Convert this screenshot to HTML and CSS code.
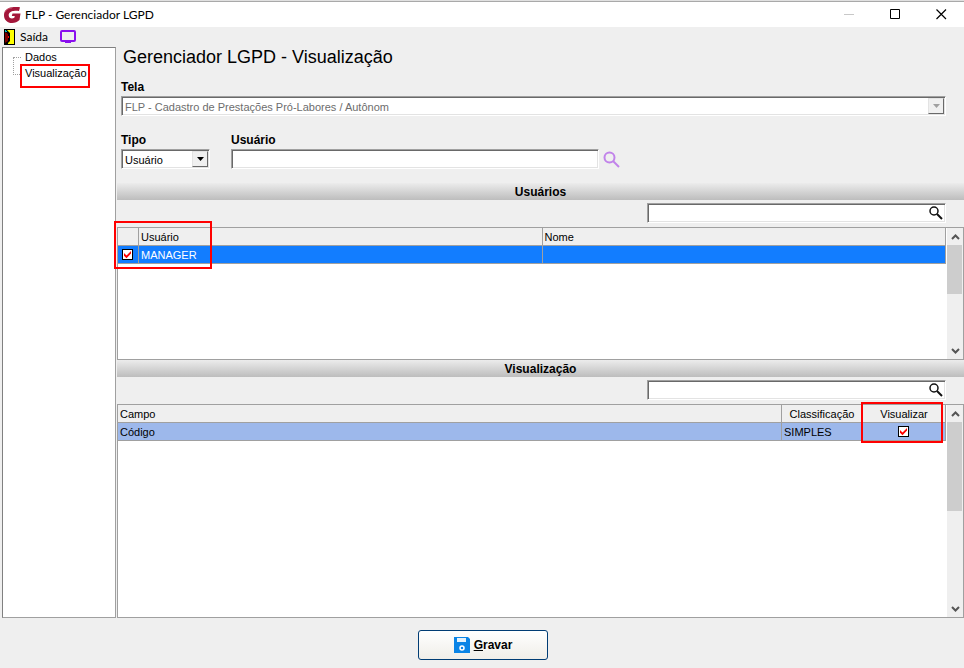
FILE: index.html
```html
<!DOCTYPE html>
<html lang="pt-BR">
<head>
    <meta charset="UTF-8">
    <meta name="viewport" content="width=device-width, initial-scale=1.0">
    <title>FLP - Gerenciador LGPD</title>
    <link rel="stylesheet" href="styles.css">
</head>
<body>
    <header class="titlebar">
        <svg class="logo" width="17" height="16" viewBox="0 0 17 16">
            <path d="M16 0.300C13.500 -.1 10 0 7 .5C3 1.200 0 4 0 8.200C0 12.800 3.300 16 8 16C11 16 13.500 15 15.500 13L16.500 6.500H8.500L7.800 9H10.800L10.300 10.800C8 12.300 4.800 11.500 4.700 8.300C4.600 5.500 7 4 10 3.900C12 3.800 13.500 3.900 15 4.100Z" fill="#a3163a"/>
            <path d="M1 5C2.500 2 5 1.200 8 1" fill="none" stroke="#c9506b"/>
        </svg>
        <span class="caption">FLP - Gerenciador LGPD</span>
        <button class="win-btn" aria-label="Minimizar">
            <svg width="11" height="11"><path d="M0 5.500H10" stroke="#c8c8c8"/></svg>
        </button>
        <button class="win-btn" aria-label="Maximizar">
            <svg width="11" height="11"><path d="M.5.5H9.500V9.500H.5Z" fill="none" stroke="#000"/></svg>
        </button>
        <button class="win-btn" aria-label="Fechar">
            <svg width="11" height="11"><path d="M.5.5L10 10M10 .5L.5 10" stroke="#000" stroke-width="1.200"/></svg>
        </button>
    </header>

    <div class="toolbar">
        <button class="tool-btn">
            <svg width="11" height="16" viewBox="0 0 11 16">
                <path d="M0 0H11V16H0Z" fill="#000"/>
                <path d="M4 1H10V15H4V14L6 12V4L3 1Z" fill="#ff0"/>
                <path d="M1 3L4 5V12L1 14Z" fill="#840000"/>
                <path d="M1 1H2V3H1ZM2 2H3V3H2Z" fill="#00c8c8"/>
                <path d="M4 7H5V9H4Z" fill="#f00"/>
            </svg>
            <span>Saída</span>
        </button>
        <button class="tool-btn" aria-label="Tela">
            <svg width="16" height="14" viewBox="0 0 16 14">
                <rect x="1" y="1" width="14" height="10" rx="1" fill="none" stroke="#8a0fee" stroke-width="2"/>
                <path d="M5 11H11V13H5Z" fill="#8a0fee"/>
            </svg>
        </button>
    </div>

    <div class="main">
        <nav class="tree">
            <a href="#dados">Dados</a>
            <a href="#visualizacao" class="marked">Visualização</a>
        </nav>

        <main class="content">
            <h1>Gerenciador LGPD - Visualização</h1>
            <div class="form">
                <div class="field">
                    <label for="tela">Tela</label>
                    <div class="combo disabled">
                        <select id="tela" disabled>
                            <option>FLP - Cadastro de Prestações Pró-Labores / Autônom</option>
                        </select>
                        <span class="drop"><svg width="7" height="4"><path d="M0 0H7L3.500 4Z" fill="#a0a0a0"/></svg></span>
                    </div>
                </div>
                <div class="form-row">
                    <div class="field tipo">
                        <label for="tipo">Tipo</label>
                        <div class="combo">
                            <select id="tipo">
                                <option>Usuário</option>
                            </select>
                            <span class="drop"><svg width="7" height="4"><path d="M0 0H7L3.500 4Z" fill="#000"/></svg></span>
                        </div>
                    </div>
                    <div class="field usuario">
                        <label for="usuario">Usuário</label>
                        <input class="textbox" type="text" id="usuario">
                    </div>
                    <button class="lookup" aria-label="Pesquisar usuário">
                        <svg width="17" height="17" viewBox="0 0 17 17" fill="none" stroke="#c183ea" stroke-width="2">
                            <circle cx="6.500" cy="6.500" r="5"/>
                            <path d="M10 10L16 16"/>
                        </svg>
                    </button>
                </div>
            </div>

            <h2>Usuários</h2>
            <div class="search">
                <input type="text" aria-label="Pesquisar em usuários">
                <svg width="14" height="14" viewBox="0 0 14 14" fill="none" stroke="#111">
                    <circle cx="5" cy="5" r="4" stroke-width="1.500"/>
                    <path d="M8 8L13 13" stroke-width="2"/>
                </svg>
            </div>
            <div class="grid users">
                <div class="grid-body">
                    <table>
                        <colgroup><col class="col-check"><col><col></colgroup>
                        <thead>
                            <tr><th></th><th>Usuário</th><th>Nome</th></tr>
                        </thead>
                        <tbody>
                            <tr class="selected">
                                <td class="check"><input type="checkbox" aria-label="MANAGER" checked></td>
                                <td>MANAGER</td>
                                <td></td>
                            </tr>
                        </tbody>
                    </table>
                </div>
                <div class="scrollbar">
                    <svg width="9" height="6"><path d="M1 5L4.500 1.500L8 5" fill="none" stroke="#555" stroke-width="2"/></svg>
                    <div class="track"><div class="thumb"></div></div>
                    <svg width="9" height="6"><path d="M1 1L4.500 4.500L8 1" fill="none" stroke="#555" stroke-width="2"/></svg>
                </div>
                <div class="mark mark-user"></div>
            </div>

            <h2>Visualização</h2>
            <div class="search">
                <input type="text" aria-label="Pesquisar em visualização">
                <svg width="14" height="14" viewBox="0 0 14 14" fill="none" stroke="#111">
                    <circle cx="5" cy="5" r="4" stroke-width="1.500"/>
                    <path d="M8 8L13 13" stroke-width="2"/>
                </svg>
            </div>
            <div class="grid fields">
                <div class="grid-body">
                    <table>
                        <colgroup><col><col class="col-class"><col class="col-view"></colgroup>
                        <thead>
                            <tr><th>Campo</th><th class="center">Classificação</th><th class="center">Visualizar</th></tr>
                        </thead>
                        <tbody>
                            <tr class="current">
                                <td>Código</td>
                                <td>SIMPLES</td>
                                <td class="check"><input type="checkbox" aria-label="Visualizar Código" checked></td>
                            </tr>
                        </tbody>
                    </table>
                </div>
                <div class="scrollbar">
                    <svg width="9" height="6"><path d="M1 5L4.500 1.500L8 5" fill="none" stroke="#555" stroke-width="2"/></svg>
                    <div class="track"><div class="thumb"></div></div>
                    <svg width="9" height="6"><path d="M1 1L4.500 4.500L8 1" fill="none" stroke="#555" stroke-width="2"/></svg>
                </div>
                <div class="mark mark-view"></div>
            </div>
        </main>
    </div>

    <footer class="footer">
        <button class="save">
            <svg width="16" height="16" viewBox="0 0 16 16">
                <path d="M0 0H14L16 2V16H0Z" fill="#0a84e6"/>
                <path d="M3 1H12V5H3Z" fill="#e4f2fc"/>
                <circle cx="8" cy="11" r="2" fill="none" stroke="#fff" stroke-width="1.500"/>
            </svg>
            <span><u>G</u>ravar</span>
        </button>
    </footer>
</body>
</html>
```
FILE: styles.css
```css
* {
    box-sizing: border-box;
}
body {
    display: flex;
    flex-direction: column;
    min-height: 100vh;
    margin: 0;
    border-top: 1px solid #e0e0e0;
    background-color: #efefef;
    color: #000;
    font-family: "Liberation Sans", Arial, sans-serif;
    font-size: 11px;
    line-height: 16px;
}
button {
    padding: 0;
    border: none;
    background: none;
    color: inherit;
    font: inherit;
}
svg {
    display: block;
}

/* window caption */
.titlebar {
    display: flex;
    align-items: center;
    height: 26px;
    padding-left: 4px;
    border-top: 1px solid #a9a9a9;
    background-color: #fff;
    font-family: Lato, "Open Sans", sans-serif;
}
.caption {
    flex: 1;
    padding-left: 4px;
    font-size: 12px;
}
.win-btn {
    display: flex;
    align-items: center;
    justify-content: center;
    width: 46px;
    height: 100%;
}
.toolbar {
    display: flex;
    gap: 12px;
    height: 20px;
    padding-left: 4px;
    font-family: Lato, "Open Sans", sans-serif;
    font-size: 12px;
}
.tool-btn {
    display: flex;
    align-items: center;
    gap: 5px;
}

.main {
    display: flex;
    flex: 1;
    gap: 1px;
    padding-left: 2px;
}
.tree {
    width: 114px;
    padding: 1px 0 0 10px;
    border: 1px solid #808080;
    border-right-color: #a0a0a0;
    border-bottom-color: #a0a0a0;
    background-color: #fff;
}
.tree a {
    display: flex;
    align-items: center;
    width: max-content;
    height: 16px;
    color: #000;
    text-decoration: none;
}
.tree a::before {
    content: "";
    width: 8px;
    margin-right: 4px;
    border-top: 1px dotted #a0a0a0;
}
.tree a.marked {
    position: relative;
}
.tree a.marked::before {
    align-self: flex-start;
    height: 17px;
    margin-top: -8px;
    margin-right: 3px;
    border: dotted #a0a0a0;
    border-width: 0 0 1px 1px;
}
.tree a.marked::after {
    content: "";
    position: absolute;
    inset: -1px -3px -7px 7px;
    border: 2px solid #f00;
}

.content {
    display: flex;
    flex: 1;
    flex-direction: column;
    min-width: 0;
}
h1 {
    margin: 0;
    padding-left: 6px;
    font-size: 18px;
    font-weight: normal;
    line-height: 21px;
}
.form {
    display: flex;
    flex-direction: column;
    gap: 16px;
    padding: 11px 18px 14px 4px;
}
.form-row {
    display: flex;
    align-items: flex-end;
}
.field {
    display: flex;
    flex-direction: column;
    gap: 1px;
}
.field label {
    font-size: 12px;
    font-weight: bold;
}
.tipo {
    width: 89px;
    margin-right: 21px;
}
.usuario {
    flex: 0 1 368px;
}
.combo,
.textbox,
.search input {
    height: 20px;
    border: 1px solid;
    border-color: #a0a0a0 #fff #fff #a0a0a0;
    background-color: #fff;
    box-shadow: inset 1px 1px #696969, inset -1px -1px #e3e3e3;
    font: inherit;
}
.combo {
    display: flex;
    position: relative;
}
.combo select {
    flex: 1;
    min-width: 0;
    padding: 1px 20px 0 3px;
    border: none;
    background: transparent;
    appearance: none;
    color: #000;
    font: inherit;
}
.combo select:disabled {
    color: #6d6d6d;
    opacity: 1;
}
.drop {
    display: flex;
    position: absolute;
    top: 1px;
    right: 1px;
    bottom: 1px;
    align-items: center;
    justify-content: center;
    width: 16px;
    border: 1px solid;
    border-color: #e3e3e3 #696969 #696969 #e3e3e3;
    background-color: #f0f0f0;
    pointer-events: none;
}
.lookup {
    margin: 0 0 1px 4px;
}

h2 {
    height: 17px;
    margin: 0;
    background: linear-gradient(#ececec, #bdbdbd);
    font-size: 12px;
    line-height: 18px;
    text-align: center;
}
.search {
    position: relative;
    align-self: flex-end;
    width: 299px;
    margin: 3px 18px 4px 0;
}
.search input {
    display: block;
    width: 100%;
}
.search svg {
    position: absolute;
    top: 3px;
    right: 3px;
}

.grid {
    display: flex;
    position: relative;
    border: 1px solid #a0a0a0;
    background-color: #fff;
}
.users {
    height: 133px;
}
.fields {
    flex: 1;
}
.grid-body {
    flex: 1;
    padding-right: 1px;
}
table {
    width: 100%;
    border-collapse: separate;
    border-spacing: 0;
    table-layout: fixed;
}
th,
td {
    height: 18px;
    padding: 1px 2px 0;
    border: solid #a0a0a0;
    border-width: 0 1px 1px 0;
    font-weight: normal;
    line-height: 16px;
    text-align: left;
}
th {
    background-color: #efefef;
}
th.center {
    text-align: center;
}
td.check {
    padding: 0 1px 0 0;
}
.selected {
    background-color: #127dff;
    color: #fff;
}
.current {
    background-color: #9db8eb;
}
.col-check {
    width: 21px;
}
.col-class {
    width: 81px;
}
.col-view {
    width: 83px;
}
input[type="checkbox"] {
    display: block;
    width: 11px;
    height: 11px;
    margin: 0 auto;
    border: 1px solid #000;
    background-color: #fff;
    appearance: none;
}
input[type="checkbox"]:checked::after {
    content: "";
    display: block;
    width: 9px;
    height: 9px;
    background-color: #f00;
    clip-path: polygon(11% 33%, 39% 60%, 89% 11%, 89% 40%, 39% 92%, 11% 64%);
}

.scrollbar {
    display: flex;
    flex-direction: column;
    align-items: center;
    width: 16px;
    padding: 6px 0 5px;
    background-color: #efefef;
}
.track {
    flex: 1;
    width: 100%;
    padding: 5px 1px 0 0;
}
.thumb {
    height: 49px;
    background-color: #cdcdcd;
}
.fields .thumb {
    height: 89px;
}

/* red highlight frames */
.mark {
    position: absolute;
    border: 2px solid #f00;
    pointer-events: none;
}
.mark-user {
    top: -7px;
    left: -4px;
    width: 98px;
    height: 48px;
}
.mark-view {
    top: -3px;
    right: 20px;
    width: 82px;
    height: 41px;
}

.footer {
    display: flex;
    justify-content: center;
    padding: 12px 0 8px 2px;
}
.save {
    display: flex;
    align-items: center;
    justify-content: center;
    gap: 4px;
    width: 130px;
    height: 30px;
    border: 1px solid #003c74;
    border-radius: 3px;
    background: linear-gradient(#fff, #f0eee8);
    font-size: 12px;
    font-weight: bold;
}
```
